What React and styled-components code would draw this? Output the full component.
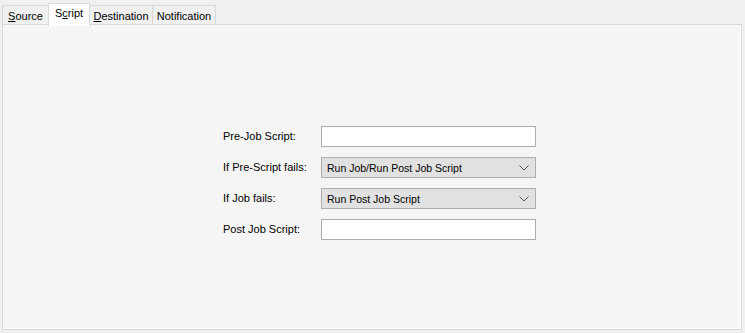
import React from "react";
import styled, { createGlobalStyle } from "styled-components";

const Global = createGlobalStyle`
  html, body {
    margin: 0;
    padding: 0;
    background: #f0f0f0;
    font-family: "Liberation Sans", Arial, sans-serif;
    font-size: 11px;
    color: #000;
  }
`;

const Window = styled.div`
  width: 745px;
  height: 333px;
  box-sizing: border-box;
  padding: 3px 4px 0 2px;
  display: flex;
  flex-direction: column;
`;

const TabStrip = styled.div`
  display: flex;
  align-items: flex-end;
  height: 22px;
  position: relative;
  z-index: 1;
`;

const Tab = styled.div`
  box-sizing: border-box;
  width: ${(p) => p.$w}px;
  height: ${(p) => (p.$active ? 23 : 20)}px;
  margin-left: -1px;
  margin-bottom: ${(p) => (p.$active ? -1 : 0)}px;
  border: 1px solid #d9d9d9;
  border-bottom: ${(p) => (p.$active ? "none" : "1px solid #d9d9d9")};
  background: ${(p) => (p.$active ? "#ffffff" : "#f0f0f0")};
  display: flex;
  justify-content: center;
  padding-top: ${(p) => (p.$active ? 3 : 4)}px;
  position: relative;
  z-index: ${(p) => (p.$active ? 2 : 1)};
  &:first-child {
    margin-left: 0;
  }
  u {
    text-decoration: underline;
    text-underline-offset: 1px;
  }
`;

const Panel = styled.div`
  box-sizing: border-box;
  width: 740px;
  height: 306px;
  margin-top: -1px;
  border: 1px solid #d9d9d9;
  background: #f5f5f5;
  box-shadow: inset -1px -1px 0 #ffffff;
  padding: 101px 0 0 220px;
`;

const Form = styled.div`
  display: grid;
  grid-template-columns: 98px 215px;
  row-gap: 10px;
  align-items: center;
`;

const Label = styled.div`
  line-height: 21px;
`;

const TextBox = styled.div`
  box-sizing: border-box;
  height: 21px;
  border: 1px solid #adadad;
  background: #ffffff;
`;

const Select = styled.div`
  box-sizing: border-box;
  height: 21px;
  border: 1px solid #adadad;
  background: #e1e1e1;
  display: flex;
  align-items: center;
  justify-content: space-between;
  padding: 0 6px 0 5px;
  font-size: 10.5px;
`;

const Chevron = () => (
  <svg width="10" height="6" viewBox="0 0 10 6">
    <path d="M0.5 0.5 L5 5 L9.5 0.5" fill="none" stroke="#555" strokeWidth="1" />
  </svg>
);

export default function App() {
  return (
    <Window>
      <Global />
      <TabStrip>
        <Tab $w={47}>
          <span>
            <u>S</u>ource
          </span>
        </Tab>
        <Tab $w={42} $active>
          <span>
            S<u>c</u>ript
          </span>
        </Tab>
        <Tab $w={64}>
          <span>
            <u>D</u>estination
          </span>
        </Tab>
        <Tab $w={64}>
          <span>Notification</span>
        </Tab>
      </TabStrip>
      <Panel>
        <Form>
          <Label>Pre-Job Script:</Label>
          <TextBox />
          <Label>If Pre-Script fails:</Label>
          <Select>
            <span>Run Job/Run Post Job Script</span>
            <Chevron />
          </Select>
          <Label>If Job fails:</Label>
          <Select>
            <span>Run Post Job Script</span>
            <Chevron />
          </Select>
          <Label>Post Job Script:</Label>
          <TextBox />
        </Form>
      </Panel>
    </Window>
  );
}
